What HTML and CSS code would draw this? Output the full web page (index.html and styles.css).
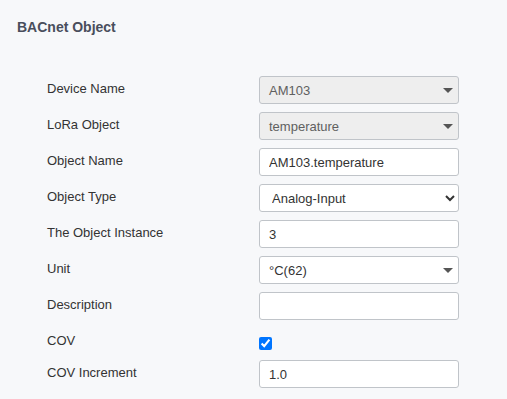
FILE: index.html
```html
<!DOCTYPE html>
<html lang="en">
<head>
    <meta charset="UTF-8">
    <title>BACnet Object</title>
    <link rel="stylesheet" href="styles.css">
</head>
<body>
    <div class="panel">
        <h2 class="title">BACnet Object</h2>

        <div class="form">
            <label class="label">Device Name</label>
            <div class="dropdown disabled"><span>AM103</span><i class="caret"></i></div>

            <label class="label">LoRa Object</label>
            <div class="dropdown disabled"><span>temperature</span><i class="caret"></i></div>

            <label class="label">Object Name</label>
            <input class="field" type="text" value="AM103.temperature">

            <label class="label">Object Type</label>
            <select class="field select">
                <option>Analog-Input</option>
                <option>Analog-Output</option>
                <option>Analog-Value</option>
            </select>

            <label class="label">The Object Instance</label>
            <input class="field" type="text" value="3">

            <label class="label">Unit</label>
            <div class="dropdown"><span>°C(62)</span><i class="caret"></i></div>

            <label class="label">Description</label>
            <input class="field" type="text" value="">

            <label class="label">COV</label>
            <div class="check-row"><input class="check" type="checkbox" checked></div>

            <label class="label">COV Increment</label>
            <input class="field" type="text" value="1.0">
        </div>
    </div>
</body>
</html>
```

FILE: styles.css
```css
* { margin: 0; padding: 0; box-sizing: border-box; }
body {
    background-color: #f7f8fa;
    color: #333;
    font-family: "Liberation Sans", Arial, sans-serif;
    font-size: 13px;
}
.panel { padding: 19px 0 0 17px; }
.title {
    font-size: 14px;
    font-weight: bold;
    line-height: 16px;
    color: #494e5c;
}
.form {
    display: grid;
    grid-template-columns: 212px 200px;
    row-gap: 8px;
    margin: 41px 0 0 30px;
}
.label {
    padding-top: 5px;
    line-height: 16px;
    color: #333;
}
.field, .dropdown {
    height: 28px;
    width: 200px;
    border: 1px solid #c0c4c9;
    border-radius: 3px;
    background-color: #fff;
    font-family: inherit;
    font-size: 13px;
    color: #333;
    padding: 0 9px;
    outline: none;
}
.select { padding: 0 4px 0 8px; }
.dropdown {
    display: flex;
    align-items: center;
    justify-content: space-between;
    padding: 0 5px 0 9px;
}
.dropdown.disabled {
    background-color: #eeeeee;
    color: #606060;
}
.caret {
    width: 0;
    height: 0;
    border-left: 5px solid transparent;
    border-right: 5px solid transparent;
    border-top: 5px solid #555;
}
.check-row { height: 24px; }
.check {
    width: 13px;
    height: 13px;
    margin: 9px 0 0 0;
}
```
